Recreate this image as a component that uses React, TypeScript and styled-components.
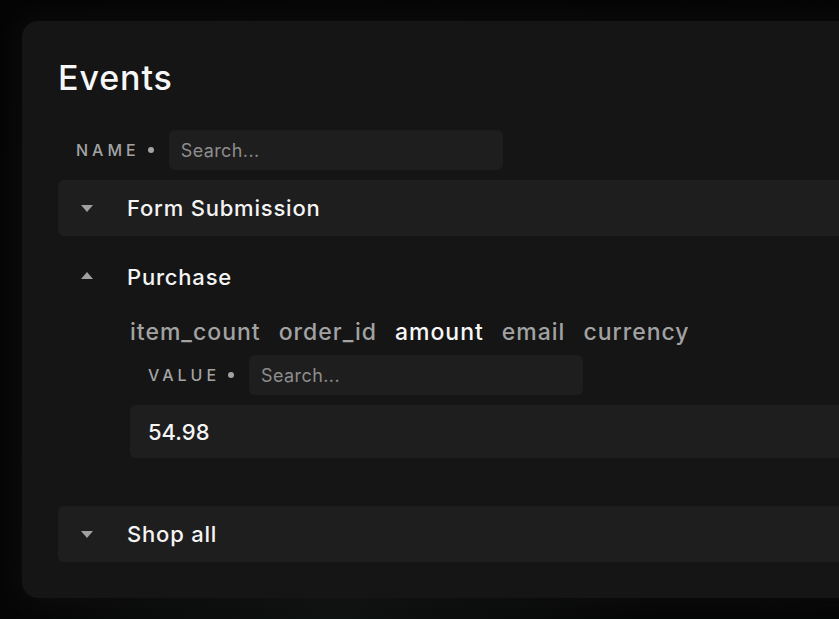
import React from "react";
import styled, { createGlobalStyle } from "styled-components";

const Global = createGlobalStyle`
  html, body { margin: 0; padding: 0; background: #050505; overflow: hidden; }
  body { width: 839px; height: 619px; font-family: Inter, "Open Sans", sans-serif; -webkit-font-smoothing: antialiased; }
  * { box-sizing: border-box; }
`;

const Stage = styled.div`
  width: 839px;
  height: 619px;
  padding: 21px 0 0 22px;
  overflow: hidden;
  background: radial-gradient(ellipse at 40% 100%, #101311 0%, #060606 45%, #040404 100%);
`;

const Panel = styled.section`
  width: 1000px;
  background: #151515;
  border-radius: 16px;
  padding: 36px;
  display: flex;
  flex-direction: column;
  box-shadow: 0 0 30px rgba(20, 22, 21, 0.6);
`;

const Title = styled.h1`
  margin: 0 0 32px 0;
  font-size: 34px;
  line-height: 41px;
  font-weight: 500;
  color: #f7f7f7;
  letter-spacing: 0.9px;
`;

const FilterRow = styled.div<{ $indent: number }>`
  display: flex;
  align-items: center;
  padding-left: ${(p) => p.$indent}px;
  height: 40px;
`;

const FilterLabel = styled.span`
  font-size: 16px;
  font-weight: 500;
  letter-spacing: 4px;
  color: #a3a3a3;
  text-transform: uppercase;
`;

const Dot = styled.span`
  width: 6px;
  height: 6px;
  border-radius: 50%;
  background: #a3a3a3;
  margin: 0 15px 0 8px;
  flex: none;
`;

const SearchBox = styled.div`
  width: 334px;
  height: 40px;
  border-radius: 6px;
  background: #1e1e1e;
  display: flex;
  align-items: center;
  padding-left: 12px;
  font-size: 18px;
  letter-spacing: 0.4px;
  color: #8d8d8d;
`;

const Item = styled.div<{ $open?: boolean }>`
  margin-top: ${(p) => (p.$open ? 13 : 10)}px;
  border-radius: 6px;
  background: ${(p) => (p.$open ? "transparent" : "#1e1e1e")};
`;

const ItemHeader = styled.div`
  height: 56px;
  display: flex;
  align-items: center;
  padding-left: 23px;
`;

const Caret = styled.span<{ $up?: boolean }>`
  width: 0;
  height: 0;
  border-left: 6.5px solid transparent;
  border-right: 6.5px solid transparent;
  ${(p) =>
    p.$up
      ? "border-bottom: 7px solid #a0a0a0; margin-top: -4px;"
      : "border-top: 7px solid #a0a0a0; margin-top: 1px;"}
  margin-right: 34px;
  flex: none;
`;

const ItemTitle = styled.span`
  font-size: 22px;
  font-weight: 500;
  letter-spacing: 0.8px;
  color: #f4f4f4;
`;

const ItemBody = styled.div`
  padding: 12px 0 38px 72px;
  display: flex;
  flex-direction: column;
`;

const Tabs = styled.div`
  display: flex;
  gap: 18px;
  height: 30px;
  align-items: center;
  margin-bottom: 8px;
`;

const Tab = styled.span<{ $active?: boolean }>`
  font-size: 23px;
  font-weight: 500;
  letter-spacing: 1px;
  color: ${(p) => (p.$active ? "#f7f7f7" : "#a2a2a2")};
`;

const ValueBox = styled.div`
  margin-top: 10px;
  height: 53px;
  background: #1e1e1e;
  border-radius: 6px;
  display: flex;
  align-items: center;
  padding-left: 18px;
  font-size: 22px;
  font-weight: 500;
  color: #f5f5f5;
`;

export default function App() {
  return (
    <>
      <Global />
      <Stage>
        <Panel>
          <Title>Events</Title>
          <FilterRow $indent={18}>
            <FilterLabel>Name</FilterLabel>
            <Dot />
            <SearchBox>Search...</SearchBox>
          </FilterRow>
          <Item>
            <ItemHeader>
              <Caret />
              <ItemTitle>Form Submission</ItemTitle>
            </ItemHeader>
          </Item>
          <Item $open>
            <ItemHeader>
              <Caret $up />
              <ItemTitle>Purchase</ItemTitle>
            </ItemHeader>
            <ItemBody>
              <Tabs>
                <Tab>item_count</Tab>
                <Tab>order_id</Tab>
                <Tab $active>amount</Tab>
                <Tab>email</Tab>
                <Tab>currency</Tab>
              </Tabs>
              <FilterRow $indent={18}>
                <FilterLabel>Value</FilterLabel>
                <Dot />
                <SearchBox>Search...</SearchBox>
              </FilterRow>
              <ValueBox>54.98</ValueBox>
            </ItemBody>
          </Item>
          <Item>
            <ItemHeader>
              <Caret />
              <ItemTitle>Shop all</ItemTitle>
            </ItemHeader>
          </Item>
        </Panel>
      </Stage>
    </>
  );
}
